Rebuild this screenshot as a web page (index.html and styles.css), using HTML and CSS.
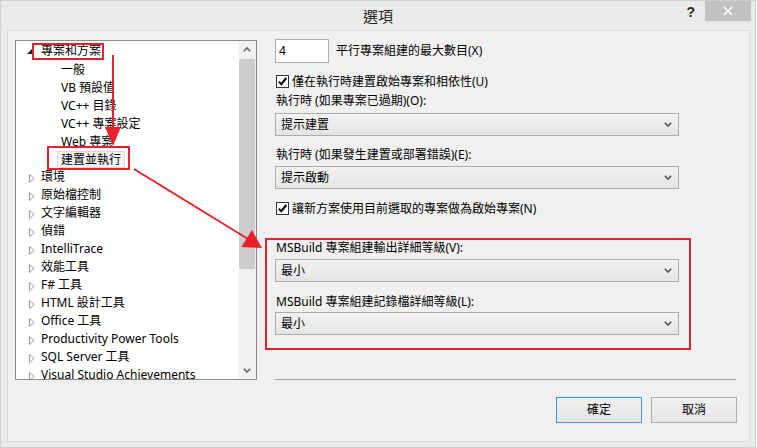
FILE: index.html
```html
<!DOCTYPE html>
<html lang="zh-Hant">
<head>
<meta charset="utf-8">
<title>選項</title>
<link rel="stylesheet" href="styles.css">
</head>
<body>
<div class="window">
  <div class="titlebar">
    <div class="title">選項</div>
    <div class="tb-right">
      <div class="help">?</div>
      <div class="close"><svg width="10" height="10" viewBox="0 0 10 10"><path d="M1 1 L9 9 M9 1 L1 9" stroke="#fff" stroke-width="1.6" fill="none"/></svg></div>
    </div>
  </div>
  <div class="panel">
    <div class="tree">
      <div class="tree-list">
        <div class="row"><span class="tw"><svg class="tri-open" width="6" height="6" viewBox="0 0 6 6"><polygon points="6,0 6,6 0,6" fill="#1e1e1e"/></svg></span><span>專案和方案</span></div>
        <div class="row child"><span class="item">一般</span></div>
        <div class="row child"><span class="item">VB 預設值</span></div>
        <div class="row child"><span class="item">VC++ 目錄</span></div>
        <div class="row child"><span class="item">VC++ 專案設定</span></div>
        <div class="row child"><span class="item">Web 專案</span></div>
        <div class="row child"><span class="item sel">建置並執行</span></div>
        <div class="row"><span class="tw"><svg class="tri" width="6" height="9" viewBox="0 0 6 9"><polygon points="0.5,0.5 5.2,4.5 0.5,8.5" fill="none" stroke="#9a9a9a"/></svg></span><span>環境</span></div>
        <div class="row"><span class="tw"><svg class="tri" width="6" height="9" viewBox="0 0 6 9"><polygon points="0.5,0.5 5.2,4.5 0.5,8.5" fill="none" stroke="#9a9a9a"/></svg></span><span>原始檔控制</span></div>
        <div class="row"><span class="tw"><svg class="tri" width="6" height="9" viewBox="0 0 6 9"><polygon points="0.5,0.5 5.2,4.5 0.5,8.5" fill="none" stroke="#9a9a9a"/></svg></span><span>文字編輯器</span></div>
        <div class="row"><span class="tw"><svg class="tri" width="6" height="9" viewBox="0 0 6 9"><polygon points="0.5,0.5 5.2,4.5 0.5,8.5" fill="none" stroke="#9a9a9a"/></svg></span><span>偵錯</span></div>
        <div class="row"><span class="tw"><svg class="tri" width="6" height="9" viewBox="0 0 6 9"><polygon points="0.5,0.5 5.2,4.5 0.5,8.5" fill="none" stroke="#9a9a9a"/></svg></span><span>IntelliTrace</span></div>
        <div class="row"><span class="tw"><svg class="tri" width="6" height="9" viewBox="0 0 6 9"><polygon points="0.5,0.5 5.2,4.5 0.5,8.5" fill="none" stroke="#9a9a9a"/></svg></span><span>效能工具</span></div>
        <div class="row"><span class="tw"><svg class="tri" width="6" height="9" viewBox="0 0 6 9"><polygon points="0.5,0.5 5.2,4.5 0.5,8.5" fill="none" stroke="#9a9a9a"/></svg></span><span>F# 工具</span></div>
        <div class="row"><span class="tw"><svg class="tri" width="6" height="9" viewBox="0 0 6 9"><polygon points="0.5,0.5 5.2,4.5 0.5,8.5" fill="none" stroke="#9a9a9a"/></svg></span><span>HTML 設計工具</span></div>
        <div class="row"><span class="tw"><svg class="tri" width="6" height="9" viewBox="0 0 6 9"><polygon points="0.5,0.5 5.2,4.5 0.5,8.5" fill="none" stroke="#9a9a9a"/></svg></span><span>Office 工具</span></div>
        <div class="row"><span class="tw"><svg class="tri" width="6" height="9" viewBox="0 0 6 9"><polygon points="0.5,0.5 5.2,4.5 0.5,8.5" fill="none" stroke="#9a9a9a"/></svg></span><span>Productivity Power Tools</span></div>
        <div class="row"><span class="tw"><svg class="tri" width="6" height="9" viewBox="0 0 6 9"><polygon points="0.5,0.5 5.2,4.5 0.5,8.5" fill="none" stroke="#9a9a9a"/></svg></span><span>SQL Server 工具</span></div>
        <div class="row"><span class="tw"><svg class="tri" width="6" height="9" viewBox="0 0 6 9"><polygon points="0.5,0.5 5.2,4.5 0.5,8.5" fill="none" stroke="#9a9a9a"/></svg></span><span>Visual Studio Achievements</span></div>
      </div>
      <div class="vscroll">
        <div class="sb-btn"><svg width="8" height="5" viewBox="0 0 8 5"><path d="M0.8 4.2 L4 1 L7.2 4.2" stroke="#606060" stroke-width="1.6" fill="none"/></svg></div>
        <div class="thumb"></div>
        <div class="sb-space"></div>
        <div class="sb-btn"><svg width="8" height="5" viewBox="0 0 8 5"><path d="M0.8 0.8 L4 4 L7.2 0.8" stroke="#606060" stroke-width="1.6" fill="none"/></svg></div>
      </div>
    </div>

    <div class="right">
      <div class="numrow">
        <div class="num">4</div>
        <div class="numlabel">平行專案組建的最大數目(X)</div>
      </div>
      <div class="check check1">
        <span class="cb"><svg width="11" height="11" viewBox="0 0 11 11"><path d="M1.8 5.6 L4.3 8.2 L9.3 2" stroke="#000" stroke-width="2" fill="none"/></svg></span>
        <span>僅在執行時建置啟始專案和相依性(U)</span>
      </div>
      <div class="lbl lbl-o">執行時 (如果專案已過期)(O):</div>
      <div class="select sel-1"><span>提示建置</span><svg width="8" height="5" viewBox="0 0 8 5"><path d="M0.8 0.8 L4 4 L7.2 0.8" stroke="#555" stroke-width="1.6" fill="none"/></svg></div>
      <div class="lbl lbl-e">執行時 (如果發生建置或部署錯誤)(E):</div>
      <div class="select sel-2"><span>提示啟動</span><svg width="8" height="5" viewBox="0 0 8 5"><path d="M0.8 0.8 L4 4 L7.2 0.8" stroke="#555" stroke-width="1.6" fill="none"/></svg></div>
      <div class="check check2">
        <span class="cb"><svg width="11" height="11" viewBox="0 0 11 11"><path d="M1.8 5.6 L4.3 8.2 L9.3 2" stroke="#000" stroke-width="2" fill="none"/></svg></span>
        <span>讓新方案使用目前選取的專案做為啟始專案(N)</span>
      </div>
      <div class="group">
        <div class="glbl">MSBuild 專案組建輸出詳細等級(V):</div>
        <div class="select gsel-1"><span>最小</span><svg width="8" height="5" viewBox="0 0 8 5"><path d="M0.8 0.8 L4 4 L7.2 0.8" stroke="#555" stroke-width="1.6" fill="none"/></svg></div>
        <div class="glbl glbl-2">MSBuild 專案組建記錄檔詳細等級(L):</div>
        <div class="select gsel-2"><span>最小</span><svg width="8" height="5" viewBox="0 0 8 5"><path d="M0.8 0.8 L4 4 L7.2 0.8" stroke="#555" stroke-width="1.6" fill="none"/></svg></div>
      </div>
      <div class="sep"></div>
      <div class="buttons">
        <div class="btn default">確定</div>
        <div class="btn">取消</div>
      </div>
    </div>
  </div>

  <svg class="annot" width="757" height="448" viewBox="0 0 757 448">
    <rect x="33" y="44" width="70" height="15" fill="none" stroke="#e8202a" stroke-width="2"/>
    <rect x="48" y="147" width="81" height="22" fill="none" stroke="#e8202a" stroke-width="2"/>
    <line x1="113" y1="55" x2="113" y2="130" stroke="#e8202a" stroke-width="2"/>
    <polygon points="105,127 121,127 113,146" fill="#e8202a"/>
    <line x1="134" y1="169" x2="248" y2="239" stroke="#e8202a" stroke-width="2"/>
    <polygon points="262,248 241.4,247 251.9,230" fill="#e8202a"/>
  </svg>
</div>
</body>
</html>
```

FILE: styles.css
```css
* {
  box-sizing: border-box;
}

body {
  margin: 0;
  background: #ffffff;
  font-family: "Noto Sans", "Noto Sans CJK TC", sans-serif;
  font-size: 12px;
  color: #000;
}

.window {
  position: relative;
  width: 756px;
  height: 448px;
  border: 1px solid #d0d0d0;
  background: #eaeaea;
  display: flex;
  flex-direction: column;
}

.titlebar {
  height: 29px;
  flex: none;
  display: grid;
  grid-template-columns: 1fr auto 1fr;
}

.title {
  grid-column: 2;
  font-family: "Noto Sans CJK TC", sans-serif;
  font-size: 15px;
  line-height: 29px;
  color: #222;
}

.tb-right {
  grid-column: 3;
  display: flex;
  justify-content: flex-end;
  align-items: flex-start;
}

.help {
  font-family: "Liberation Sans", sans-serif;
  font-weight: bold;
  font-size: 14px;
  line-height: 22px;
  color: #2a2a2a;
  margin-right: 10px;
}

.close {
  width: 46px;
  height: 20px;
  margin-right: 4px;
  background: #c2c2c2;
  display: flex;
  align-items: center;
  justify-content: center;
}

.panel {
  margin: 0 5px 0 6px;
  height: 412px;
  border: 1px solid #d9d9d9;
  background: #f0f0f0;
  padding: 9px 0 0 7px;
  display: flex;
  align-items: flex-start;
}

/* tree */
.tree {
  width: 242px;
  height: 340px;
  flex: none;
  border: 1px solid #8c8c8c;
  background: #fff;
  display: flex;
}

.tree-list {
  flex: 1;
  padding-top: 1px;
  overflow: hidden;
}

.row {
  height: 18px;
  display: flex;
  align-items: center;
  white-space: nowrap;
  padding-left: 10px;
  line-height: 18px;
}

.row.child {
  padding-left: 41px;
}

.tw {
  width: 15px;
  flex: none;
  display: flex;
  align-items: center;
}

.tri {
  margin-left: 3px;
  margin-top: 2px;
}

.tri-open {
  margin-left: 1px;
}

.item {
  border: 1px solid transparent;
  padding: 0 3px;
  line-height: 15px;
}

.item.sel {
  background: #f3f3f3;
  border-color: #d8d8d8;
}

.vscroll {
  width: 17px;
  flex: none;
  background: #f0f0f0;
  display: flex;
  flex-direction: column;
}

.sb-btn {
  height: 17px;
  flex: none;
  display: flex;
  align-items: center;
  justify-content: center;
  padding-right: 1px;
}

.thumb {
  height: 210px;
  margin: 1px 1px 0 0;
  background: #cdcdcd;
}

.sb-space {
  flex: 1;
}

/* right side */
.right {
  margin-left: 18px;
  margin-top: -1px;
  width: 462px;
  display: flex;
  flex-direction: column;
  align-items: flex-start;
}

.numrow {
  display: flex;
  align-items: center;
  height: 24px;
}

.num {
  width: 54px;
  height: 24px;
  border: 1px solid #acacac;
  background: #fff;
  padding-left: 3px;
  line-height: 22px;
}

.numlabel {
  margin-left: 7px;
  line-height: 18px;
}

.check {
  display: flex;
  align-items: center;
  height: 13px;
  margin-left: 1px;
  line-height: 13px;
}

.cb {
  width: 13px;
  height: 13px;
  border: 1px solid #333;
  background: #fff;
  margin-right: 3px;
  display: flex;
}

.check1 {
  margin-top: 12px;
}

.lbl {
  line-height: 18px;
  height: 18px;
  padding-left: 1px;
}

.lbl-o {
  margin-top: 4px;
}

.lbl-e {
  margin-top: 10px;
}

.select {
  height: 23px;
  width: 404px;
  border: 1px solid #acacac;
  background: linear-gradient(#f2f2f2, #e4e4e4);
  display: flex;
  align-items: center;
  justify-content: space-between;
  padding: 0 6px 0 5px;
  line-height: 18px;
}

.sel-1 {
  margin-top: 3px;
}

.sel-2 {
  margin-top: 2px;
}

.check2 {
  margin-top: 13px;
}

.group {
  margin-top: 23px;
  margin-left: -10px;
  width: 426px;
  height: 112px;
  border: 2px solid #e8202a;
  padding-left: 8px;
}

.glbl {
  line-height: 16px;
  height: 16px;
  padding-left: 1px;
}

.glbl-2 {
  margin-top: 12px;
}

.gsel-1 {
  margin-top: 3px;
}

.gsel-2 {
  margin-top: 2px;
}

.sep {
  margin-top: 29px;
  width: 461px;
  height: 1px;
  background: #a0a0a0;
}

.buttons {
  margin-top: 17px;
  align-self: stretch;
  display: flex;
  justify-content: flex-end;
  gap: 9px;
}

.btn {
  width: 86px;
  height: 26px;
  border: 1px solid #acacac;
  background: linear-gradient(#f0f0f0, #e5e5e5);
  text-align: center;
  line-height: 24px;
}

.btn.default {
  border-color: #3399ff;
}

/* annotation overlay */
.annot {
  position: absolute;
  top: -1px;
  left: -1px;
  pointer-events: none;
}
```
